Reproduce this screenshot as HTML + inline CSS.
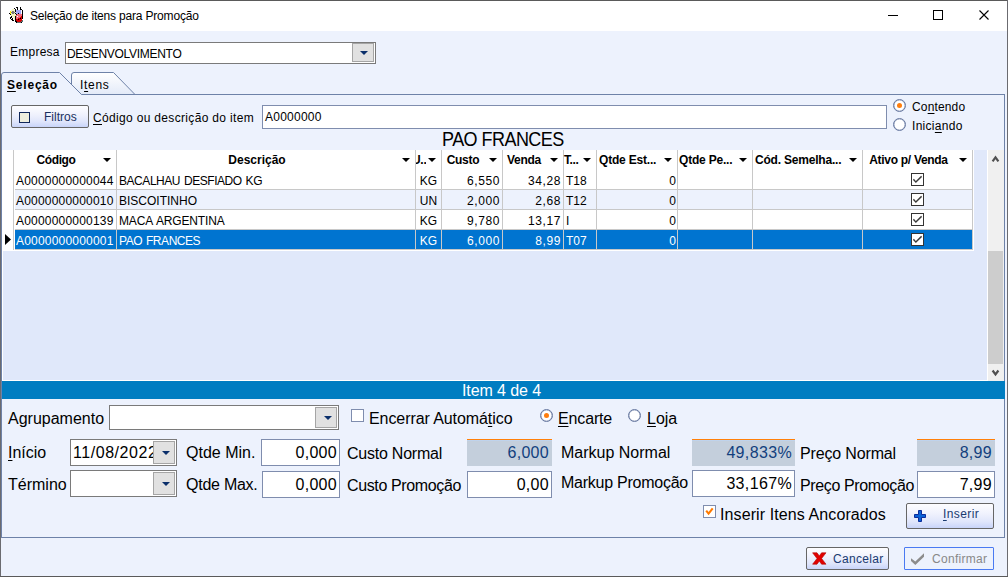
<!DOCTYPE html>
<html><head><meta charset="utf-8">
<style>
*{box-sizing:border-box;margin:0;padding:0}
html,body{width:1008px;height:577px;overflow:hidden;background:#EDF2FD;font-family:"Liberation Sans",sans-serif;color:#000}
.a{position:absolute}
.t{position:absolute;white-space:nowrap;line-height:1}
.box{position:absolute;background:#fff;border:1px solid #7F8DAE}
.combo{position:absolute;background:#fff;border:1px solid #7a7a7a}
.cbtn{position:absolute;background:#E1E1E1;border:1px solid #A5A5A5}
.arr{position:absolute;width:0;height:0;border-left:4px solid transparent;border-right:4px solid transparent;border-top:4.5px solid #0B2F6B}
.ro{position:absolute;background:#C4CFDC;border-top:1px solid #FF800A;box-shadow:inset 0 1px #BFD3EC}
.ul{text-decoration:underline;text-underline-offset:2px}
.hd{position:absolute;top:154px;height:20px;font-weight:bold;font-size:12px;line-height:1}
.harr{position:absolute;width:0;height:0;border-left:4px solid transparent;border-right:4px solid transparent;border-top:4px solid #000}
.vl{position:absolute;top:150px;width:1px;height:100px;background:#C8C8C8}
.cell{position:absolute;font-size:12px;line-height:1;white-space:nowrap}
.chk{position:absolute;width:13px;height:13px;border:1px solid #333;background:#fff}
.radio{position:absolute;width:13px;height:13px;border:1px solid #6577A0;border-radius:50%;background:#fff;box-shadow:inset 0 0 0 0.3px #6577A0}
.btn{position:absolute;border:1px solid #666;border-radius:2px;background:linear-gradient(#fdfdff 0%,#f0f2fd 40%,#dfe5fb 75%,#c8d4f9 100%)}
</style></head><body>
<!-- title bar -->
<div class="a" style="left:0;top:0;width:1008px;height:31px;background:#fff"></div>
<div class="t" style="left:30px;top:10px;font-size:12px;letter-spacing:-0.18px">Seleção de itens para Promoção</div>
<div class="a" style="left:888px;top:15px;width:10px;height:1px;background:#000"></div>
<div class="a" style="left:933px;top:10px;width:10px;height:10px;border:1px solid #000"></div>
<svg class="a" style="left:979px;top:10px" width="10" height="10"><path d="M0.5 0.5L9.5 9.5M9.5 0.5L0.5 9.5" stroke="#000" stroke-width="1.1"/></svg>
<!-- app icon -->
<svg class="a" style="left:8px;top:7px" width="16" height="16" shape-rendering="crispEdges"><rect x="8" y="0" width="2" height="1" fill="#000"/><rect x="10" y="0" width="2" height="1" fill="#fff"/><rect x="12" y="0" width="1" height="1" fill="#000"/><rect x="6" y="1" width="1" height="1" fill="#000"/><rect x="9" y="1" width="1" height="1" fill="#000"/><rect x="10" y="1" width="2" height="1" fill="#fff"/><rect x="12" y="1" width="1" height="1" fill="#000"/><rect x="4" y="2" width="2" height="1" fill="#F6F4BE"/><rect x="7" y="2" width="1" height="1" fill="#000"/><rect x="9" y="2" width="1" height="1" fill="#000"/><rect x="10" y="2" width="2" height="1" fill="#fff"/><rect x="12" y="2" width="2" height="1" fill="#000"/><rect x="3" y="3" width="4" height="1" fill="#F6F4BE"/><rect x="7" y="3" width="1" height="1" fill="#000"/><rect x="8" y="3" width="5" height="1" fill="#A4A6F6"/><rect x="13" y="3" width="1" height="1" fill="#fff"/><rect x="14" y="3" width="1" height="1" fill="#000"/><rect x="2" y="4" width="1" height="1" fill="#FFF000"/><rect x="3" y="4" width="1" height="1" fill="#F6F4BE"/><rect x="4" y="4" width="2" height="1" fill="#7A7A7A"/><rect x="6" y="4" width="1" height="1" fill="#F6F4BE"/><rect x="7" y="4" width="1" height="1" fill="#000"/><rect x="8" y="4" width="5" height="1" fill="#A4A6F6"/><rect x="13" y="4" width="1" height="1" fill="#fff"/><rect x="14" y="4" width="1" height="1" fill="#000"/><rect x="2" y="5" width="1" height="1" fill="#FFF000"/><rect x="3" y="5" width="4" height="1" fill="#7A7A7A"/><rect x="7" y="5" width="1" height="1" fill="#F6F4BE"/><rect x="8" y="5" width="5" height="1" fill="#A4A6F6"/><rect x="13" y="5" width="1" height="1" fill="#fff"/><rect x="14" y="5" width="1" height="1" fill="#000"/><rect x="1" y="6" width="1" height="1" fill="#000"/><rect x="2" y="6" width="1" height="1" fill="#FFF000"/><rect x="3" y="6" width="1" height="1" fill="#F6F4BE"/><rect x="4" y="6" width="2" height="1" fill="#7A7A7A"/><rect x="6" y="6" width="1" height="1" fill="#F6F4BE"/><rect x="7" y="6" width="1" height="1" fill="#000"/><rect x="8" y="6" width="2" height="1" fill="#A4A6F6"/><rect x="10" y="6" width="1" height="1" fill="#000"/><rect x="11" y="6" width="2" height="1" fill="#A4A6F6"/><rect x="13" y="6" width="1" height="1" fill="#fff"/><rect x="14" y="6" width="1" height="1" fill="#000"/><rect x="2" y="7" width="1" height="1" fill="#000"/><rect x="3" y="7" width="5" height="1" fill="#F6F4BE"/><rect x="8" y="7" width="1" height="1" fill="#000"/><rect x="9" y="7" width="5" height="1" fill="#F46C7C"/><rect x="14" y="7" width="1" height="1" fill="#000"/><rect x="3" y="8" width="5" height="1" fill="#F6F4BE"/><rect x="8" y="8" width="6" height="1" fill="#F46C7C"/><rect x="14" y="8" width="1" height="1" fill="#000"/><rect x="3" y="9" width="1" height="1" fill="#000"/><rect x="4" y="9" width="3" height="1" fill="#F6F4BE"/><rect x="7" y="9" width="1" height="1" fill="#000"/><rect x="8" y="9" width="1" height="1" fill="#F46C7C"/><rect x="9" y="9" width="1" height="1" fill="#fff"/><rect x="10" y="9" width="3" height="1" fill="#F46C7C"/><rect x="13" y="9" width="1" height="1" fill="#D80000"/><rect x="14" y="9" width="1" height="1" fill="#000"/><rect x="2" y="10" width="2" height="1" fill="#000"/><rect x="4" y="10" width="1" height="1" fill="#fff"/><rect x="5" y="10" width="2" height="1" fill="#F6F4BE"/><rect x="7" y="10" width="1" height="1" fill="#000"/><rect x="8" y="10" width="4" height="1" fill="#F46C7C"/><rect x="12" y="10" width="2" height="1" fill="#D80000"/><rect x="14" y="10" width="1" height="1" fill="#000"/><rect x="2" y="11" width="1" height="1" fill="#000"/><rect x="3" y="11" width="1" height="1" fill="#fff"/><rect x="4" y="11" width="1" height="1" fill="#000"/><rect x="5" y="11" width="1" height="1" fill="#fff"/><rect x="6" y="11" width="1" height="1" fill="#F6F4BE"/><rect x="7" y="11" width="1" height="1" fill="#000"/><rect x="8" y="11" width="2" height="1" fill="#F46C7C"/><rect x="10" y="11" width="2" height="1" fill="#D80000"/><rect x="12" y="11" width="1" height="1" fill="#000"/><rect x="13" y="11" width="1" height="1" fill="#D80000"/><rect x="14" y="11" width="1" height="1" fill="#000"/><rect x="3" y="12" width="2" height="1" fill="#000"/><rect x="5" y="12" width="1" height="1" fill="#fff"/><rect x="6" y="12" width="1" height="1" fill="#F6F4BE"/><rect x="7" y="12" width="1" height="1" fill="#000"/><rect x="8" y="12" width="2" height="1" fill="#D80000"/><rect x="10" y="12" width="1" height="1" fill="#000"/><rect x="11" y="12" width="3" height="1" fill="#D80000"/><rect x="4" y="13" width="2" height="1" fill="#000"/><rect x="7" y="13" width="1" height="1" fill="#000"/><rect x="8" y="13" width="6" height="1" fill="#D80000"/><rect x="14" y="13" width="1" height="1" fill="#5E7272"/><rect x="7" y="14" width="2" height="1" fill="#000"/><rect x="9" y="14" width="4" height="1" fill="#D80000"/><rect x="13" y="14" width="2" height="1" fill="#5E7272"/><rect x="8" y="15" width="1" height="1" fill="#000"/><rect x="9" y="15" width="4" height="1" fill="#5E7272"/><rect x="13" y="15" width="1" height="1" fill="#000"/></svg>

<!-- Empresa -->
<div class="t" style="left:10px;top:46px;font-size:12px;letter-spacing:0.25px">Empresa</div>
<div class="combo" style="left:65px;top:42px;width:311px;height:22px"></div>
<div class="t" style="left:67px;top:48px;font-size:12px;letter-spacing:-0.3px">DESENVOLVIMENTO</div>
<div class="cbtn" style="left:352px;top:43px;width:22px;height:19px"></div>
<div class="arr" style="left:360px;top:51px"></div>

<!-- tab panel -->
<div class="a" style="left:1px;top:94px;width:1004px;height:444px;border:1px solid #6E82A8;background:#EDF2FD"></div>
<svg class="a" style="left:0;top:70px" width="140" height="26">
 <path d="M71.5 24.5 V5 Q71.5 2.5 74 2.5 H113.5 L135 24.5" fill="url(#g1)" stroke="#6E82A8" stroke-width="1"/>
 <defs><linearGradient id="g1" x1="0" y1="0" x2="0" y2="1"><stop offset="0" stop-color="#fff"/><stop offset="1" stop-color="#E3EAF8"/></linearGradient></defs>
 <path d="M1.5 25 V5 Q1.5 2.5 4 2.5 H59.5 L81.5 24.5 H140" fill="#EDF2FD" stroke="#6E82A8" stroke-width="1"/>
 <rect x="2" y="24" width="79" height="3" fill="#EDF2FD"/>
</svg>
<div class="t" style="left:7px;top:79px;font-size:12px;font-weight:bold;letter-spacing:0.8px"><span class="ul">S</span>eleção</div>
<div class="t" style="left:80px;top:79px;font-size:12px;letter-spacing:0.7px">I<span class="ul">t</span>ens</div>

<!-- filter row -->
<div class="btn" style="left:11px;top:105px;width:78px;height:23px"></div>
<div class="a" style="left:19px;top:112px;width:11px;height:11px;border:1px solid #10275A;background:#EEEEDD"></div>
<div class="t" style="left:44px;top:111px;font-size:12px;color:#1A3060">Filtros</div>
<div class="t" style="left:93px;top:112px;font-size:12px;letter-spacing:0.33px"><span class="ul">C</span>ódigo ou descrição do item</div>
<div class="box" style="left:262px;top:105px;width:625px;height:24px"></div>
<div class="t" style="left:265px;top:111px;font-size:12px;letter-spacing:0.25px">A0000000</div>
<div class="radio" style="left:893px;top:99px"></div>
<div class="a" style="left:896.8px;top:102.8px;width:5.4px;height:5.4px;border-radius:50%;background:#FF7E0E"></div>
<div class="t" style="left:912px;top:101px;font-size:12px;letter-spacing:0.15px">Co<span class="ul">n</span>tendo</div>
<div class="radio" style="left:893px;top:118px"></div>
<div class="t" style="left:912px;top:120px;font-size:12px;letter-spacing:0.3px">Inici<span class="ul">a</span>ndo</div>

<div class="t" style="left:441.5px;top:129px;font-size:20px;letter-spacing:-0.6px;transform:scaleX(0.9);transform-origin:0 0">PAO FRANCES</div>

<!-- grid -->
<div class="a" style="left:2px;top:150px;width:985px;height:231px;background:#E0E8FA;border-left:1px solid #fff;border-bottom:1px solid #fff"></div>
<div class="a" style="left:2px;top:150px;width:972px;height:101px;background:#fff"></div>
<div class="a" style="left:15px;top:190px;width:957px;height:19px;background:#EDF2FD"></div>
<div class="a" style="left:15px;top:230px;width:957px;height:19px;background:#0074D0"></div>
<div class="a" style="left:15px;top:189px;width:958px;height:1px;background:#C8C8C8"></div>
<div class="a" style="left:15px;top:209px;width:958px;height:1px;background:#C8C8C8"></div>
<div class="a" style="left:15px;top:229px;width:958px;height:1px;background:#C8C8C8"></div>
<div class="a" style="left:15px;top:249px;width:958px;height:1px;background:#C8C8C8"></div>
<div class="vl" style="left:13px"></div>
<div class="vl" style="left:116px"></div>
<div class="vl" style="left:415px"></div>
<div class="vl" style="left:441px"></div>
<div class="vl" style="left:502px"></div>
<div class="vl" style="left:563px"></div>
<div class="vl" style="left:596px"></div>
<div class="vl" style="left:677px"></div>
<div class="vl" style="left:752px"></div>
<div class="vl" style="left:862px"></div>
<div class="vl" style="left:972px"></div>
<svg class="a" style="left:5px;top:234px" width="7" height="11"><path d="M0 0L6 5.5L0 11Z" fill="#000"/></svg>

<!-- GRIDCONTENT -->
<div class="t hd" style="left:-44.0px;width:200px;text-align:center;letter-spacing:-0.4px">Código</div>
<div class="t hd" style="left:157.0px;width:200px;text-align:center;letter-spacing:0px">Descrição</div>
<div class="t hd" style="left:363.0px;width:200px;text-align:center;letter-spacing:-0.25px">Custo</div>
<div class="t hd" style="left:424.0px;width:200px;text-align:center;letter-spacing:-0.25px">Venda</div>
<div class="t hd" style="left:564px;letter-spacing:-0.4px">T...</div>
<div class="t hd" style="left:599px;letter-spacing:-0.2px">Qtde Est...</div>
<div class="t hd" style="left:679px;letter-spacing:-0.2px">Qtde Pe...</div>
<div class="t hd" style="left:755px;letter-spacing:-0.2px">Cód. Semelha...</div>
<div class="t hd" style="left:808.5px;width:200px;text-align:center;letter-spacing:-0.3px">Ativo p/ Venda</div>
<div class="a" style="left:416px;top:150px;width:10px;height:20px;overflow:hidden"><div class="t hd" style="left:-4px;top:4px;letter-spacing:-0.3px">U..</div></div>
<div class="harr" style="left:103px;top:158px"></div>
<div class="harr" style="left:402px;top:158px"></div>
<div class="harr" style="left:428px;top:158px"></div>
<div class="harr" style="left:489px;top:158px"></div>
<div class="harr" style="left:550px;top:158px"></div>
<div class="harr" style="left:583px;top:158px"></div>
<div class="harr" style="left:664px;top:158px"></div>
<div class="harr" style="left:739px;top:158px"></div>
<div class="harr" style="left:849px;top:158px"></div>
<div class="harr" style="left:959px;top:158px"></div>
<div class="cell" style="left:16px;top:175px;color:#000;letter-spacing:0.2px">A0000000000044</div>
<div class="cell" style="left:119px;top:175px;color:#000;letter-spacing:-0.45px;word-spacing:1px">BACALHAU DESFIADO KG</div>
<div class="cell" style="left:415px;width:27px;text-align:center;top:175px;color:#000">KG</div>
<div class="cell" style="left:441px;width:59px;text-align:right;letter-spacing:0.6px;top:175px;color:#000">6,550</div>
<div class="cell" style="left:502px;width:59px;text-align:right;letter-spacing:0.6px;top:175px;color:#000">34,28</div>
<div class="cell" style="left:566px;top:175px;color:#000">T18</div>
<div class="cell" style="left:596px;width:80px;text-align:right;top:175px;color:#000">0</div>
<div class="chk" style="left:911px;top:173px"></div>
<svg class="a" style="left:913px;top:175px" width="9" height="9"><path d="M0.4 4.3L2.9 7.1L8.6 1.3" fill="none" stroke="#3a3a3a" stroke-width="1.4"/></svg>
<div class="cell" style="left:16px;top:195px;color:#000;letter-spacing:0.2px">A0000000000010</div>
<div class="cell" style="left:119px;top:195px;color:#000;letter-spacing:0px;word-spacing:1px">BISCOITINHO</div>
<div class="cell" style="left:415px;width:27px;text-align:center;top:195px;color:#000">UN</div>
<div class="cell" style="left:441px;width:59px;text-align:right;letter-spacing:0.6px;top:195px;color:#000">2,000</div>
<div class="cell" style="left:502px;width:59px;text-align:right;letter-spacing:0.6px;top:195px;color:#000">2,68</div>
<div class="cell" style="left:566px;top:195px;color:#000">T12</div>
<div class="cell" style="left:596px;width:80px;text-align:right;top:195px;color:#000">0</div>
<div class="chk" style="left:911px;top:193px"></div>
<svg class="a" style="left:913px;top:195px" width="9" height="9"><path d="M0.4 4.3L2.9 7.1L8.6 1.3" fill="none" stroke="#3a3a3a" stroke-width="1.4"/></svg>
<div class="cell" style="left:16px;top:215px;color:#000;letter-spacing:0.2px">A0000000000139</div>
<div class="cell" style="left:119px;top:215px;color:#000;letter-spacing:-0.15px;word-spacing:1px">MACA ARGENTINA</div>
<div class="cell" style="left:415px;width:27px;text-align:center;top:215px;color:#000">KG</div>
<div class="cell" style="left:441px;width:59px;text-align:right;letter-spacing:0.6px;top:215px;color:#000">9,780</div>
<div class="cell" style="left:502px;width:59px;text-align:right;letter-spacing:0.6px;top:215px;color:#000">13,17</div>
<div class="cell" style="left:566px;top:215px;color:#000">I</div>
<div class="cell" style="left:596px;width:80px;text-align:right;top:215px;color:#000">0</div>
<div class="chk" style="left:911px;top:213px"></div>
<svg class="a" style="left:913px;top:215px" width="9" height="9"><path d="M0.4 4.3L2.9 7.1L8.6 1.3" fill="none" stroke="#3a3a3a" stroke-width="1.4"/></svg>
<div class="cell" style="left:16px;top:235px;color:#fff;letter-spacing:0.2px">A0000000000001</div>
<div class="cell" style="left:119px;top:235px;color:#fff;letter-spacing:-0.45px;word-spacing:1px">PAO FRANCES</div>
<div class="cell" style="left:415px;width:27px;text-align:center;top:235px;color:#fff">KG</div>
<div class="cell" style="left:441px;width:59px;text-align:right;letter-spacing:0.6px;top:235px;color:#fff">6,000</div>
<div class="cell" style="left:502px;width:59px;text-align:right;letter-spacing:0.6px;top:235px;color:#fff">8,99</div>
<div class="cell" style="left:566px;top:235px;color:#fff">T07</div>
<div class="cell" style="left:596px;width:80px;text-align:right;top:235px;color:#fff">0</div>
<div class="chk" style="left:911px;top:233px"></div>
<svg class="a" style="left:913px;top:235px" width="9" height="9"><path d="M0.4 4.3L2.9 7.1L8.6 1.3" fill="none" stroke="#3a3a3a" stroke-width="1.4"/></svg>

<!-- /GRIDCONTENT -->
<!-- scrollbar -->
<div class="a" style="left:987px;top:150px;width:1px;height:231px;background:#fff"></div>
<div class="a" style="left:988px;top:150px;width:16px;height:231px;background:#F0F0F0"></div>
<div class="a" style="left:988px;top:251px;width:15px;height:113px;background:#CDCDCD"></div>
<svg class="a" style="left:991px;top:155px" width="9" height="8"><path d="M1.6 6.3L4.5 2.4L7.4 6.3" fill="none" stroke="#505050" stroke-width="2.2"/></svg>
<svg class="a" style="left:991px;top:369px" width="9" height="8"><path d="M1.6 1.5L4.5 5.4L7.4 1.5" fill="none" stroke="#505050" stroke-width="2.2"/></svg>

<!-- blue bar -->
<div class="a" style="left:2px;top:381px;width:1003px;height:18px;background:#007DC1"></div>
<div class="t" style="left:462px;top:383px;font-size:16px;letter-spacing:-0.1px;color:#fff">Item 4 de 4</div>

<!-- bottom form -->
<div class="t" style="left:8px;top:411px;font-size:16px">Agrupamento</div>
<div class="combo" style="left:109px;top:405px;width:230px;height:25px"></div>
<div class="cbtn" style="left:315px;top:407px;width:22px;height:21px"></div>
<div class="arr" style="left:324px;top:416px"></div>

<div class="chk" style="left:351px;top:409px;border-color:#7F8DAE"></div>
<div class="t" style="left:369px;top:411px;font-size:16px;letter-spacing:-0.08px">Encerrar Automá<span class="ul">t</span>ico</div>
<div class="radio" style="left:540px;top:409px"></div>
<div class="a" style="left:543.8px;top:412.8px;width:5.4px;height:5.4px;border-radius:50%;background:#FF7E0E"></div>
<div class="t" style="left:558px;top:411px;font-size:16px;letter-spacing:-0.15px"><span class="ul">E</span>ncarte</div>
<div class="radio" style="left:628px;top:409px"></div>
<div class="t" style="left:647px;top:411px;font-size:16px"><span class="ul">L</span>oja</div>

<div class="t" style="left:8px;top:445px;font-size:16px"><span class="ul">I</span>nício</div>
<div class="combo" style="left:70px;top:439px;width:107px;height:27px"></div>
<div class="t" style="left:73px;top:445px;font-size:16px;letter-spacing:0.55px">11/08/2022</div>
<div class="cbtn" style="left:153px;top:441px;width:22px;height:23px"></div>
<div class="arr" style="left:162px;top:451px"></div>
<div class="t" style="left:8px;top:477px;font-size:16px">Término</div>
<div class="combo" style="left:70px;top:470px;width:107px;height:27px"></div>
<div class="cbtn" style="left:153px;top:472px;width:22px;height:23px"></div>
<div class="arr" style="left:162px;top:482px"></div>

<div class="t" style="left:186px;top:445px;font-size:16px">Qtde Min.</div>
<div class="box" style="left:261px;top:439px;width:79px;height:27px"></div>
<div class="t" style="left:261px;top:445px;width:76px;text-align:right;font-size:16px;letter-spacing:0.3px">0,000</div>
<div class="t" style="left:186px;top:477px;font-size:16px;letter-spacing:-0.25px">Qtde Max.</div>
<div class="box" style="left:262px;top:471px;width:78px;height:27px"></div>
<div class="t" style="left:262px;top:477px;width:75px;text-align:right;font-size:16px;letter-spacing:0.3px">0,000</div>

<div class="t" style="left:347px;top:446px;font-size:16px;letter-spacing:-0.23px">Custo Normal</div>
<div class="ro" style="left:467px;top:439px;width:85px;height:27px"></div>
<div class="t" style="left:467px;top:445px;width:82px;text-align:right;font-size:16px;letter-spacing:0.3px;color:#123F7E">6,000</div>
<div class="t" style="left:347px;top:478px;font-size:16px;letter-spacing:-0.37px">Custo Promoção</div>
<div class="box" style="left:467px;top:471px;width:85px;height:27px"></div>
<div class="t" style="left:467px;top:477px;width:82px;text-align:right;font-size:16px;letter-spacing:0.3px">0,00</div>

<div class="t" style="left:561px;top:445px;font-size:16px">Markup Normal</div>
<div class="ro" style="left:692px;top:439px;width:103px;height:27px"></div>
<div class="t" style="left:692px;top:445px;width:100px;text-align:right;font-size:16px;letter-spacing:0.35px;color:#123F7E">49,833%</div>
<div class="t" style="left:561px;top:475px;font-size:16px;letter-spacing:-0.25px">Markup Promoção</div>
<div class="box" style="left:692px;top:470px;width:103px;height:27px"></div>
<div class="t" style="left:692px;top:476px;width:100px;text-align:right;font-size:16px;letter-spacing:0.35px">33,167%</div>

<div class="t" style="left:800px;top:446px;font-size:16px;letter-spacing:-0.15px">Preço Normal</div>
<div class="ro" style="left:917px;top:439px;width:78px;height:27px"></div>
<div class="t" style="left:917px;top:445px;width:75px;text-align:right;font-size:16px;letter-spacing:0.3px;color:#123F7E">8,99</div>
<div class="t" style="left:800px;top:478px;font-size:16px;letter-spacing:-0.37px">Preço Promoção</div>
<div class="box" style="left:917px;top:471px;width:78px;height:27px"></div>
<div class="t" style="left:917px;top:477px;width:75px;text-align:right;font-size:16px;letter-spacing:0.3px">7,99</div>

<div class="chk" style="left:703px;top:505px;border-color:#7F8DAE"></div>
<svg class="a" style="left:705px;top:507px" width="9" height="9"><path d="M1.2 3.6L3.6 6.6L7.7 1.4" fill="none" stroke="#FF7A00" stroke-width="2.1"/></svg>
<div class="t" style="left:720px;top:507px;font-size:16px;letter-spacing:0.1px">Inserir Itens Ancorados</div>
<div class="btn" style="left:906px;top:503px;width:88px;height:26px"></div>
<svg class="a" style="left:913px;top:509px" width="14" height="14"><path d="M5.5 1.5H8.5V5.5H12.5V8.5H8.5V12.5H5.5V8.5H1.5V5.5H5.5Z" fill="#0A62D6" stroke="#0A2C9C" stroke-width="1"/></svg>
<div class="t" style="left:943px;top:508px;font-size:12px;letter-spacing:0.4px;color:#1A3A70"><span class="ul">I</span>nserir</div>

<!-- footer buttons -->
<div class="btn" style="left:806px;top:547px;width:83px;height:23px"></div>
<svg class="a" style="left:812px;top:552px" width="15" height="13"><path d="M0.6 0.8H5L7.3 3.9L9.6 0.8H14L9.6 6.5L14 12.2H9.6L7.3 9.1L5 12.2H0.6L5 6.5Z" fill="#E10000" stroke="#B00000" stroke-width="0.6"/></svg>
<div class="t" style="left:833px;top:553px;font-size:12px;letter-spacing:0.3px;color:#1A3A70">Cancelar</div>
<div class="a" style="left:904px;top:547px;width:90px;height:23px;border:1px solid #4A7AF2;border-radius:1px;background:#EDF2FD"></div>
<svg class="a" style="left:910px;top:552px" width="16" height="14"><path d="M1 6.3L5.3 9.6L14 1.2V4.7L5.3 12.9L1 9.1Z" fill="#8C8C8C"/></svg>
<div class="t" style="left:932px;top:553px;font-size:12px;letter-spacing:0.3px;color:#888">Confirmar</div>

<!-- window border -->
<div class="a" style="left:0;top:0;width:1008px;height:1px;background:#5a5a5a"></div>
<div class="a" style="left:0;top:0;width:1px;height:577px;background:#6b6b70"></div>
<div class="a" style="left:1007px;top:0;width:1px;height:577px;background:#6b6b70"></div>
<div class="a" style="left:0;top:576px;width:1008px;height:1px;background:#5a5a5a"></div>
</body></html>
